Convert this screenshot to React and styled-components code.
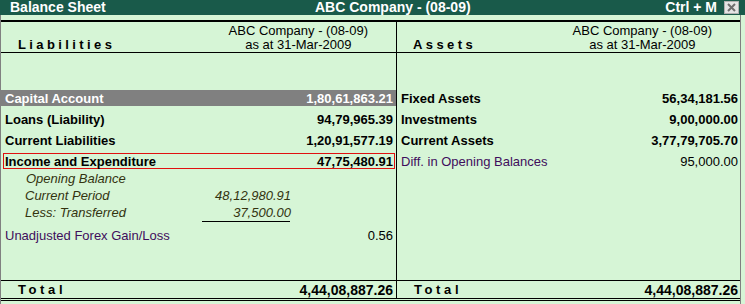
import React from "react";
import styled, { createGlobalStyle } from "styled-components";

const Global = createGlobalStyle`
  html, body { margin: 0; padding: 0; background: #ffffff; }
  body { font-family: "Liberation Sans", Arial, sans-serif; }
`;

const Window = styled.div`
  width: 745px;
  height: 304px;
  display: flex;
  flex-direction: column;
  background: #d6f5d6;
  overflow: hidden;
`;

const TitleBar = styled.div`
  height: 15px;
  flex: 0 0 15px;
  background: #195a4a;
  color: #ffffff;
  display: flex;
  align-items: center;
  font-weight: bold;
  font-size: 14px;
  line-height: 15px;
  white-space: nowrap;
`;

const TitleLeft = styled.div`
  flex: 0 0 315px;
  padding-left: 10px;
  box-sizing: border-box;
`;

const TitleCenter = styled.div`
  flex: 0 0 auto;
`;

const TitleRight = styled.div`
  margin-left: auto;
  display: flex;
  align-items: center;
  gap: 7px;
  padding-right: 6px;
`;

const CloseBox = styled.div`
  width: 13px;
  height: 11px;
  background: #e4e4e4;
  border: 1px solid #b0b0b0;
  display: flex;
  align-items: center;
  justify-content: center;
`;

const Sheet = styled.div`
  flex: 1;
  width: 741px;
  box-sizing: border-box;
  border-left: 1px solid #808080;
  border-right: 1px solid #808080;
  display: flex;
  flex-direction: column;
  padding-top: 5px;
`;

const HeaderRow = styled.div`
  display: grid;
  grid-template-columns: 396px 1fr;
  border-top: 2px solid #000;
  border-bottom: 1px solid #000;
  height: 33px;
  box-sizing: border-box;
`;

const HeaderCell = styled.div`
  display: flex;
  justify-content: space-between;
  align-items: flex-end;
  padding: 2px 28px 2px ${(p) => p.$pl}px;
  border-right: ${(p) => (p.$divider ? "1px solid #000" : "none")};
`;

const SpacedLabel = styled.div`
  font-weight: bold;
  font-size: 13px;
  letter-spacing: ${(p) => p.$ls}px;
  line-height: 14px;
  color: #000;
`;

const CompanyBlock = styled.div`
  text-align: center;
  font-size: 13px;
  line-height: 14px;
  color: #000;
`;

const BodyRow = styled.div`
  display: grid;
  grid-template-columns: 396px 1fr;
  flex: 1;
`;

const Column = styled.div`
  display: flex;
  flex-direction: column;
  padding-top: 32px;
  border-right: ${(p) => (p.$divider ? "1px solid #000" : "none")};
`;

const MainRow = styled.div`
  height: 16px;
  margin-top: 5px;
  display: flex;
  justify-content: space-between;
  align-items: center;
  padding: 0 ${(p) => (p.$right ? 2 : 3)}px 0 4px;
  font-size: 13px;
  font-weight: ${(p) => (p.$plain ? "normal" : "bold")};
  color: ${(p) => (p.$plain ? "#3f0d5c" : "#000")};
  background: ${(p) => (p.$selected ? "#808080" : "transparent")};
  white-space: nowrap;
  & > span:last-child {
    color: #000;
  }
  ${(p) =>
    p.$selected &&
    `
    color: #fff;
    & > span:last-child { color: #fff; }
  `}
`;

const BoxedRow = styled(MainRow)`
  margin-left: 2px;
  margin-right: 1px;
  padding: 0 1px 0 1px;
  border: 1px solid #e01010;
  height: 16px;
  box-sizing: border-box;
`;

const SubGroup = styled.div`
  display: flex;
  flex-direction: column;
  padding-top: 1px;
`;

const SubRow = styled.div`
  height: 17px;
  display: grid;
  grid-template-columns: 178px 88px;
  align-items: center;
  padding-left: ${(p) => p.$pl}px;
  font-size: 13px;
  font-style: italic;
  color: #33330f;
  white-space: nowrap;
`;

const SubAmount = styled.span`
  text-align: right;
  grid-column: 2;
`;

const Rule = styled.div`
  width: 88px;
  height: 1px;
  background: #000;
  margin-left: 201px;
`;

const TotalRow = styled.div`
  display: grid;
  grid-template-columns: 396px 1fr;
  border-top: 1px solid #000;
  border-bottom: 3px double #000;
  height: 21px;
  box-sizing: border-box;
  margin-bottom: 3px;
`;

const TotalCell = styled.div`
  display: flex;
  justify-content: space-between;
  align-items: center;
  padding: 0 ${(p) => p.$pr}px 0 17px;
  border-right: ${(p) => (p.$divider ? "1px solid #000" : "none")};
  font-weight: bold;
`;

const TotalAmount = styled.span`
  font-size: 14px;
  color: #000;
`;

const CloseIcon = () => (
  <svg width="9" height="9" viewBox="0 0 9 9">
    <path d="M1 1 L8 8 M8 1 L1 8" stroke="#6e6e6e" strokeWidth="2" />
  </svg>
);

const Company = () => (
  <CompanyBlock>
    <div>ABC Company - (08-09)</div>
    <div>as at 31-Mar-2009</div>
  </CompanyBlock>
);

export default function App() {
  return (
    <>
      <Global />
      <Window>
        <TitleBar>
          <TitleLeft>Balance Sheet</TitleLeft>
          <TitleCenter>ABC Company - (08-09)</TitleCenter>
          <TitleRight>
            <span>Ctrl + M</span>
            <CloseBox>
              <CloseIcon />
            </CloseBox>
          </TitleRight>
        </TitleBar>
        <Sheet>
          <HeaderRow>
            <HeaderCell $divider $pl={17}>
              <SpacedLabel $ls={3.4}>Liabilities</SpacedLabel>
              <Company />
            </HeaderCell>
            <HeaderCell $pl={16}>
              <SpacedLabel $ls={3.4}>Assets</SpacedLabel>
              <Company />
            </HeaderCell>
          </HeaderRow>
          <BodyRow>
            <Column $divider>
              <MainRow $selected>
                <span>Capital Account</span>
                <span>1,80,61,863.21</span>
              </MainRow>
              <MainRow>
                <span>Loans (Liability)</span>
                <span>94,79,965.39</span>
              </MainRow>
              <MainRow>
                <span>Current Liabilities</span>
                <span>1,20,91,577.19</span>
              </MainRow>
              <BoxedRow>
                <span>Income and Expenditure</span>
                <span>47,75,480.91</span>
              </BoxedRow>
              <SubGroup>
                <SubRow $pl={25}>
                  <span>Opening Balance</span>
                </SubRow>
                <SubRow $pl={24}>
                  <span>Current Period</span>
                  <SubAmount>48,12,980.91</SubAmount>
                </SubRow>
                <SubRow $pl={24}>
                  <span>Less: Transferred</span>
                  <SubAmount>37,500.00</SubAmount>
                </SubRow>
                <Rule />
              </SubGroup>
              <MainRow $plain>
                <span>Unadjusted Forex Gain/Loss</span>
                <span>0.56</span>
              </MainRow>
            </Column>
            <Column>
              <MainRow $right>
                <span>Fixed Assets</span>
                <span>56,34,181.56</span>
              </MainRow>
              <MainRow $right>
                <span>Investments</span>
                <span>9,00,000.00</span>
              </MainRow>
              <MainRow $right>
                <span>Current Assets</span>
                <span>3,77,79,705.70</span>
              </MainRow>
              <MainRow $right $plain>
                <span>Diff. in Opening Balances</span>
                <span>95,000.00</span>
              </MainRow>
            </Column>
          </BodyRow>
          <TotalRow>
            <TotalCell $divider $pr={3}>
              <SpacedLabel $ls={3.6}>Total</SpacedLabel>
              <TotalAmount>4,44,08,887.26</TotalAmount>
            </TotalCell>
            <TotalCell $pr={2}>
              <SpacedLabel $ls={3.6}>Total</SpacedLabel>
              <TotalAmount>4,44,08,887.26</TotalAmount>
            </TotalCell>
          </TotalRow>
        </Sheet>
      </Window>
    </>
  );
}
